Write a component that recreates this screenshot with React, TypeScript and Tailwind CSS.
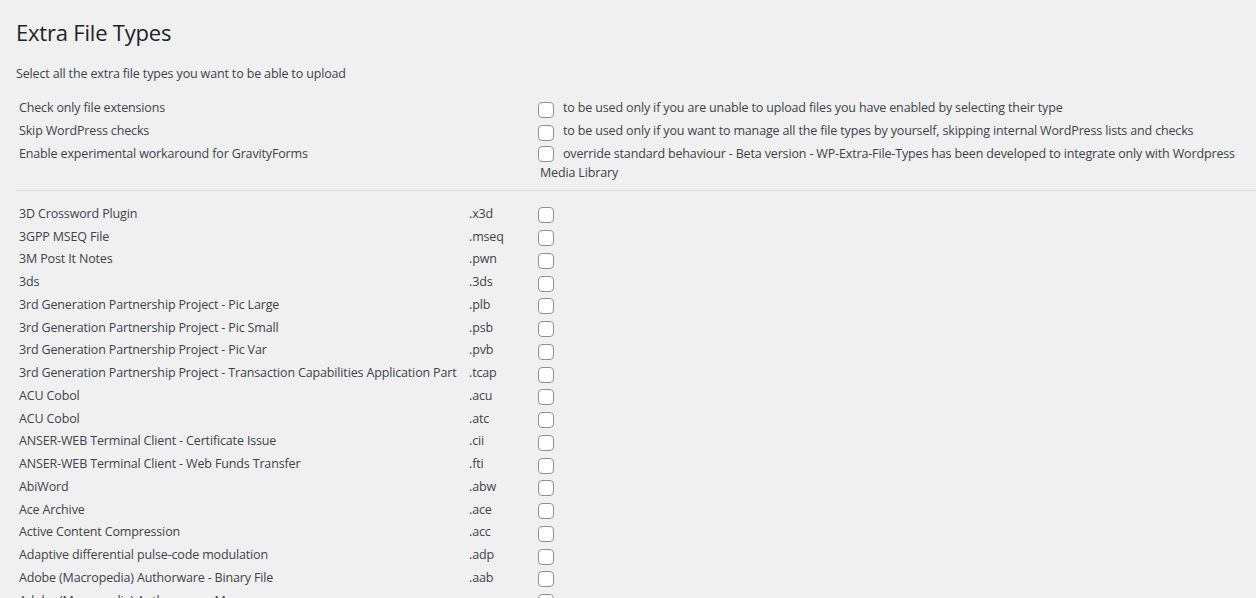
import React from "react";

const options = [
  {
    label: "Check only file extensions",
    text: "to be used only if you are unable to upload files you have enabled by selecting their type",
  },
  {
    label: "Skip WordPress checks",
    text: "to be used only if you want to manage all the file types by yourself, skipping internal WordPress lists and checks",
  },
];

const types: [string, string][] = [
  ["3D Crossword Plugin", ".x3d"],
  ["3GPP MSEQ File", ".mseq"],
  ["3M Post It Notes", ".pwn"],
  ["3ds", ".3ds"],
  ["3rd Generation Partnership Project - Pic Large", ".plb"],
  ["3rd Generation Partnership Project - Pic Small", ".psb"],
  ["3rd Generation Partnership Project - Pic Var", ".pvb"],
  ["3rd Generation Partnership Project - Transaction Capabilities Application Part", ".tcap"],
  ["ACU Cobol", ".acu"],
  ["ACU Cobol", ".atc"],
  ["ANSER-WEB Terminal Client - Certificate Issue", ".cii"],
  ["ANSER-WEB Terminal Client - Web Funds Transfer", ".fti"],
  ["AbiWord", ".abw"],
  ["Ace Archive", ".ace"],
  ["Active Content Compression", ".acc"],
  ["Adaptive differential pulse-code modulation", ".adp"],
  ["Adobe (Macropedia) Authorware - Binary File", ".aab"],
  ["Adobe (Macropedia) Authorware - Map", ".aam"],
  ["Adobe (Macropedia) Authorware - Segment File", ".aas"],
];

function Box({ className = "" }: { className?: string }) {
  return (
    <span
      className={
        "inline-block w-4 h-4 shrink-0 rounded-[4px] border border-[#8c8f94] bg-white " +
        className
      }
    />
  );
}

export default function App() {
  return (
    <div className="h-screen overflow-hidden bg-[#f0f0f1] text-[#3c434a] text-[12.5px] tracking-[-0.15px] font-['Open_Sans',sans-serif]">
      <div className="pl-4">
        <h1 className="pt-[18px] text-[22px] leading-[29px] tracking-[-0.2px] font-normal text-[#1d2327]">
          Extra File Types
        </h1>
        <p className="mt-[17px] leading-[19px]">
          Select all the extra file types you want to be able to upload
        </p>

        <div className="mt-[13px]">
          {options.map((o) => (
            <div key={o.label} className="flex h-[23px] items-center">
              <div className="w-[522px] shrink-0 pl-[3px] leading-[19px]">{o.label}</div>
              <div className="flex items-center leading-[19px] whitespace-nowrap">
                <Box className="mt-[4px] mr-[9px]" />
                <span>{o.text}</span>
              </div>
            </div>
          ))}
          <div className="flex py-[2px]">
            <div className="w-[522px] shrink-0 pl-[3px] leading-[19px]">
              Enable experimental workaround for GravityForms
            </div>
            <div className="pl-[2px] leading-[19px] whitespace-nowrap">
              <Box className="align-middle -ml-[2px] mr-[9px] -mt-[1px]" />
              override standard behaviour - Beta version - WP-Extra-File-Types has been developed to integrate only with Wordpress
              <br />
              Media Library
            </div>
          </div>
        </div>

        <div className="mt-[6px] border-t border-[#dcdcde]" />

        <div className="mt-[11px]">
          {types.map(([name, ext], i) => (
            <div key={i} className="flex h-[22.75px] items-center leading-[19px]">
              <div className="w-[453px] shrink-0 pl-[3px] whitespace-nowrap">{name}</div>
              <div className="w-[69px] shrink-0">{ext}</div>
              <Box className="mt-[4px]" />
            </div>
          ))}
        </div>
      </div>
    </div>
  );
}
